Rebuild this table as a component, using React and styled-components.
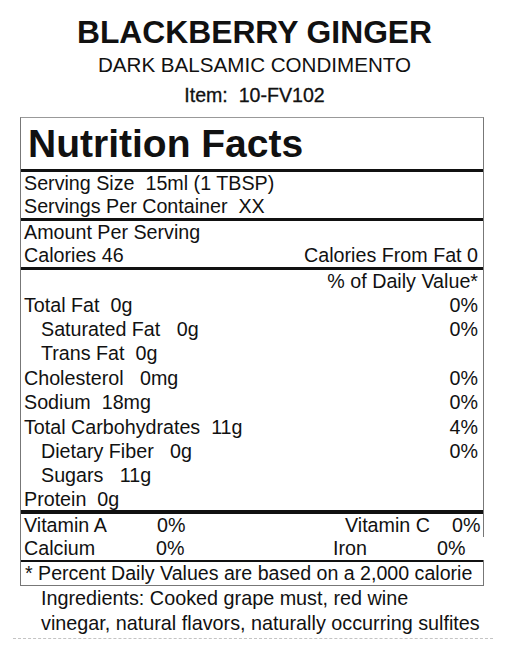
import React from 'react';
import styled, { createGlobalStyle } from 'styled-components';

const Global = createGlobalStyle`
    body {
        margin: 0;
        background: #fff;
        font-family: 'Liberation Sans', Arial, sans-serif;
        color: #111;
    }
`;

const Page = styled.div`
    width: 509px;
    height: 666px;
    padding-top: 14px;
    box-sizing: border-box;
`;

const Header = styled.header`
    text-align: center;
    margin-bottom: 7px;
`;

const Title = styled.h1`
    margin: 0;
    font-size: 31.8px;
    line-height: 36px;
    font-weight: 700;
`;

const Subtitle = styled.div`
    font-size: 20.6px;
    line-height: 30px;
`;

const ItemLine = styled.div`
    font-size: 19.6px;
    line-height: 30px;
    white-space: pre;
    -webkit-text-stroke: 0.3px #111;
`;

const Panel = styled.section`
    margin-left: 20px;
    width: 464px;
    box-sizing: border-box;
    border: 1px solid #777;
    border-top-color: #999;
`;

const PanelTitle = styled.h2`
    margin: 0;
    padding-left: 7px;
    font-size: 39px;
    line-height: 51px;
    font-weight: 700;
`;

const Rule = styled.div`
    height: ${p => p.$h || 3}px;
    background: #111;
`;

const Row = styled.div`
    display: flex;
    justify-content: space-between;
    align-items: center;
    height: ${p => p.$h || 24.4}px;
    padding: 0 5px 0 ${p => (p.$indent ? 20 : 3)}px;
    font-size: 19.7px;
    white-space: pre;
`;

const VitRow = styled.div`
    display: flex;
    align-items: center;
    height: 23px;
    padding-left: 3px;
    margin-right: ${p => (p.$open ? '-1px' : '0')};
    background: #fff;
    font-size: 19.7px;
    white-space: pre;
`;

const VitCell = styled.span`
    width: ${p => (p.$w ? `${p.$w}px` : 'auto')};
    flex: none;
`;

const Footnote = styled.div`
    height: 23px;
    line-height: 23px;
    padding-left: 4px;
    font-size: 19.6px;
    white-space: nowrap;
`;

const Ingredients = styled.p`
    margin: 0;
    padding-left: 41px;
    font-size: 19.8px;
    line-height: 24.5px;
`;

const Dashed = styled.div`
    margin: 3px 16px 0 13px;
    border-top: 1px dashed #c4c4c4;
`;

const nutrients = [
    { name: 'Total Fat  0g', dv: '0%' },
    { name: 'Saturated Fat   0g', dv: '0%', indent: true },
    { name: 'Trans Fat  0g', indent: true },
    { name: 'Cholesterol   0mg', dv: '0%' },
    { name: 'Sodium  18mg', dv: '0%' },
    { name: 'Total Carbohydrates  11g', dv: '4%' },
    { name: 'Dietary Fiber   0g', dv: '0%', indent: true },
    { name: 'Sugars   11g', indent: true },
    { name: 'Protein  0g', h: 22 },
];

const App = () => {
    return (
        <Page>
            <Global />
            <Header>
                <Title>BLACKBERRY GINGER</Title>
                <Subtitle>DARK BALSAMIC CONDIMENTO</Subtitle>
                <ItemLine>Item:  10-FV102</ItemLine>
            </Header>

            <Panel>
                <PanelTitle>Nutrition Facts</PanelTitle>
                <Rule $h={3} />
                <Row $h={23}><span>Serving Size  15ml (1 TBSP)</span></Row>
                <Row $h={23}><span>Servings Per Container  XX</span></Row>
                <Rule $h={3} />
                <Row $h={23}><span>Amount Per Serving</span></Row>
                <Row $h={23}>
                    <span>Calories 46</span>
                    <span>Calories From Fat 0</span>
                </Row>
                <Rule $h={3} />
                <Row $h={23}>
                    <span />
                    <span>% of Daily Value*</span>
                </Row>
                {nutrients.map(n => (
                    <Row key={n.name} $indent={n.indent} $h={n.h}>
                        <span>{n.name}</span>
                        <span>{n.dv || ''}</span>
                    </Row>
                ))}
                <Rule $h={4} />
                <VitRow>
                    <VitCell $w={133}>Vitamin A</VitCell>
                    <VitCell $w={188}>0%</VitCell>
                    <VitCell $w={107}>Vitamin C</VitCell>
                    <VitCell>0%</VitCell>
                </VitRow>
                <VitRow $open>
                    <VitCell $w={132}>Calcium</VitCell>
                    <VitCell $w={177}>0%</VitCell>
                    <VitCell $w={104}>Iron</VitCell>
                    <VitCell>0%</VitCell>
                </VitRow>
                <Rule $h={2} />
                <Footnote>* Percent Daily Values are based on a 2,000 calorie</Footnote>
            </Panel>

            <Ingredients>
                Ingredients: Cooked grape must, red wine<br />
                vinegar, natural flavors, naturally occurring sulfites
            </Ingredients>
            <Dashed />
        </Page>
    );
};

export default App;
